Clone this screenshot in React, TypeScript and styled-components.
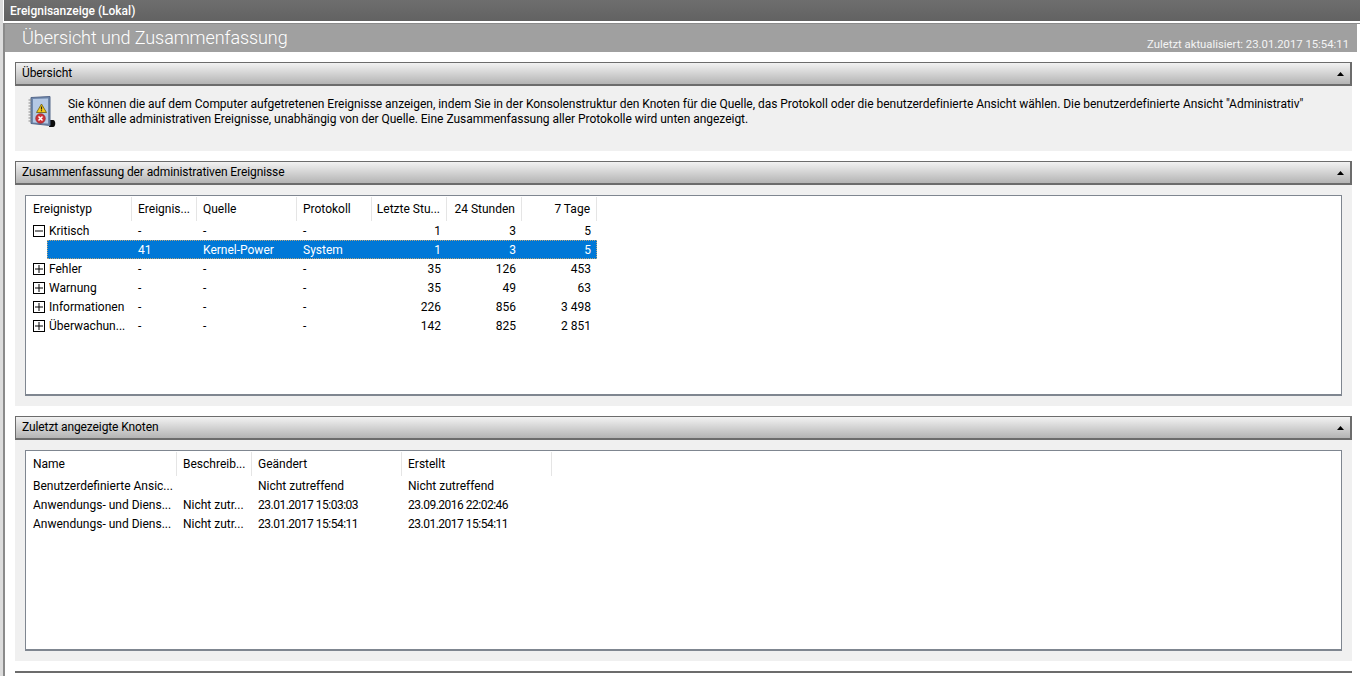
import React from "react";
import styled, { createGlobalStyle } from "styled-components";

const Global = createGlobalStyle`
  html, body { margin: 0; padding: 0; background: #fff; overflow: hidden; }
  body { font-family: Roboto, "Liberation Sans", sans-serif; font-size: 12px; color: #000; }
`;

const Page = styled.div`
  width: 1360px;
  height: 676px;
  display: flex;
  overflow: hidden;
  background: #fff;
`;
const Rail = styled.div`
  width: 3px;
  background: #dcdcdc;
  flex: none;
`;
const Main = styled.div`
  flex: 1;
  display: flex;
  flex-direction: column;
  min-width: 0;
`;
const TitleBar = styled.div`
  height: 21px;
  margin-left: 1px;
  padding-left: 6px;
  display: flex;
  align-items: center;
  font-weight: 500;
  font-size: 12px;
  color: #fff;
  background: linear-gradient(#6e6e6e, #626262);
`;
const Content = styled.div`
  flex: 1;
  margin-top: 2px;
  border-top: 1px solid #8a8a8a;
  border-left: 2px solid #8a8a8a;
  display: flex;
  flex-direction: column;
`;
const Banner = styled.div`
  height: 28px;
  margin-right: 3px;
  background: #a0a0a0;
  display: flex;
  align-items: flex-end;
  justify-content: space-between;
  padding: 0 8px 0 17px;
  color: #fff;
`;
const BannerTitle = styled.div`
  font-size: 18px;
  font-weight: 300;
  letter-spacing: -0.08px;
  line-height: 28px;
`;
const BannerMeta = styled.div`
  font-size: 11.3px;
  line-height: 14px;
  color: #f4f4f4;
`;
const Sections = styled.div`
  padding: 10px 8px 0 10px;
  display: flex;
  flex-direction: column;
  gap: 10px;
`;
const Section = styled.section`
  display: flex;
  flex-direction: column;
`;
const SectionHeader = styled.header`
  box-sizing: border-box;
  height: 24px;
  border: solid #6c6c6c;
  border-width: 1px 2px 2px 1px;
  padding: 0 0 2px 6px;
  display: flex;
  align-items: center;
  justify-content: space-between;
  letter-spacing: -0.1px;
  background: linear-gradient(#f2f2f2, #b4b4b4);
`;
const Caret = styled.svg`
  width: 7px;
  height: 4px;
  margin: 2px 6px 0 0;
  flex: none;
`;
const SectionBody = styled.div<{ $h: number }>`
  height: ${(p) => p.$h}px;
  box-sizing: border-box;
  background: #f0f0f0;
  padding: 10px;
  display: flex;
`;
const Intro = styled.div`
  display: flex;
  gap: 11px;
  padding-left: 2px;
`;
const IntroIcon = styled.svg`
  width: 30px;
  height: 32px;
  flex: none;
`;
const IntroText = styled.p`
  margin: 0;
  padding-top: 1px;
  line-height: 15px;
  white-space: nowrap;
  letter-spacing: -0.03px;
`;
const ListBox = styled.div`
  flex: 1;
  min-width: 0;
  background: #fff;
  border: solid #7f8690;
  border-width: 1px 1px 2px 1px;
  padding-top: 1px;
`;
const Row = styled.div<{ $cols: string }>`
  display: grid;
  grid-template-columns: ${(p) => p.$cols};
  height: 19px;
  align-items: start;
  line-height: 18px;
`;
const HeadRow = styled(Row)`
  height: 24px;
  line-height: 24px;
  align-items: stretch;
`;
const HeadCell = styled.div<{ $right?: boolean }>`
  padding: ${(p) => (p.$right ? "0 6px 0 0" : "0 0 0 6px")};
  text-align: ${(p) => (p.$right ? "right" : "left")};
  border-right: 1px solid #e5e5e5;
  white-space: nowrap;
  overflow: hidden;
  &:first-child { padding-left: 7px; }
`;
const Cell = styled.div<{ $right?: boolean; $date?: boolean }>`
  padding: ${(p) => (p.$right ? "1px 6px 0 0" : "1px 0 0 6px")};
  text-align: ${(p) => (p.$right ? "right" : "left")};
  letter-spacing: ${(p) => (p.$date ? "-0.5px" : "normal")};
  white-space: nowrap;
  overflow: hidden;
  &:first-child { padding-left: 7px; }
`;
const TreeCell = styled.div`
  height: 19px;
  display: flex;
  align-items: center;
  gap: 4px;
  padding-left: 7px;
  white-space: nowrap;
`;
const TreeLabel = styled.span`
  padding-top: 2px;
  line-height: 17px;
`;
const Expander = styled.svg`
  width: 12px;
  height: 12px;
  flex: none;
`;
const SelectedRow = styled(Row)`
  margin-left: 21px;
  width: max-content;
  background: #0078d7;
  color: #fff;
  outline: 1px dotted #b9a47c;
  outline-offset: -1px;
`;
const EndRule = styled.div`
  height: 2px;
  background: #6c6c6c;
`;

const summaryCols = "106px 65px 100px 75px 75px 75px 75px";
const selectedCols = "85px 65px 100px 75px 75px 75px 75px";
const nodeCols = "151px 75px 150px 150px";

const Plus = ({ open }: { open?: boolean }) => (
  <Expander viewBox="0 0 12 12">
    <rect x="0.5" y="0.5" width="11" height="11" fill="#fff" stroke="#000" />
    <path d="M2 6h8" stroke="#000" />
    {!open && <path d="M6 2v8" stroke="#000" />}
  </Expander>
);

const Chevron = () => (
  <Caret viewBox="0 0 7 4">
    <path d="M3.5 0L7 4H0z" fill="#000" />
  </Caret>
);

const BookIcon = () => (
  <IntroIcon viewBox="0 0 30 32">
    <path d="M23 24h3c3 0 3 7 0 7h-4z" fill="#0c0c0c" />
    <path d="M4 1.5l19-1v29l-19-2z" fill="#6f88ad" stroke="#55688a" />
    <path d="M6 3l15-.5v25L6 26.5z" fill="#b4c8e4" />
    <path d="M4.5 4h-3M4.5 7h-3M4.5 10h-3M4.5 13h-3M4.5 16h-3M4.5 19h-3M4.5 22h-3M4.5 25h-3" stroke="#8b8b8b" strokeWidth="1" />
    <path d="M14.5 8l5 8.5h-10z" fill="#f4c918" stroke="#6b5a10" strokeWidth="0.8" />
    <path d="M14.5 10.5v3M14.5 14.3v1" stroke="#222" strokeWidth="1.2" />
    <circle cx="13.5" cy="22.5" r="4.8" fill="#d03338" stroke="#8d1c20" strokeWidth="0.6" />
    <path d="M11.5 20.5l4 4M15.5 20.5l-4 4" stroke="#fff" strokeWidth="1.5" />
  </IntroIcon>
);

const summary = [
  { name: "Fehler", a: "35", b: "126", c: "453" },
  { name: "Warnung", a: "35", b: "49", c: "63" },
  { name: "Informationen", a: "226", b: "856", c: "3 498" },
  { name: "Überwachun...", a: "142", b: "825", c: "2 851" },
];
const nodes = [
  ["Benutzerdefinierte Ansic...", "", "Nicht zutreffend", "Nicht zutreffend"],
  ["Anwendungs- und Diens...", "Nicht zutr...", "23.01.2017 15:03:03", "23.09.2016 22:02:46"],
  ["Anwendungs- und Diens...", "Nicht zutr...", "23.01.2017 15:54:11", "23.01.2017 15:54:11"],
];

export default function App() {
  return (
    <Page>
      <Global />
      <Rail />
      <Main>
        <TitleBar>Ereignisanzeige (Lokal)</TitleBar>
        <Content>
          <Banner>
            <BannerTitle>Übersicht und Zusammenfassung</BannerTitle>
            <BannerMeta>Zuletzt aktualisiert: 23.01.2017 15:54:11</BannerMeta>
          </Banner>
          <Sections>
            <Section>
              <SectionHeader>
                Übersicht
                <Chevron />
              </SectionHeader>
              <SectionBody $h={65}>
                <Intro>
                  <BookIcon />
                  <IntroText>
                    Sie können die auf dem Computer aufgetretenen Ereignisse anzeigen, indem Sie in der Konsolenstruktur den Knoten für die Quelle, das Protokoll oder die benutzerdefinierte Ansicht wählen. Die benutzerdefinierte Ansicht "Administrativ"<br />enthält alle administrativen Ereignisse, unabhängig von der Quelle. Eine Zusammenfassung aller Protokolle wird unten angezeigt.
                  </IntroText>
                </Intro>
              </SectionBody>
            </Section>
            <Section>
              <SectionHeader>
                Zusammenfassung der administrativen Ereignisse
                <Chevron />
              </SectionHeader>
              <SectionBody $h={221}>
                <ListBox>
                  <HeadRow $cols={summaryCols}>
                    <HeadCell>Ereignistyp</HeadCell>
                    <HeadCell>Ereignis...</HeadCell>
                    <HeadCell>Quelle</HeadCell>
                    <HeadCell>Protokoll</HeadCell>
                    <HeadCell $right>Letzte Stu...</HeadCell>
                    <HeadCell $right>24 Stunden</HeadCell>
                    <HeadCell $right>7 Tage</HeadCell>
                  </HeadRow>
                  <Row $cols={summaryCols}>
                    <TreeCell><Plus open /><TreeLabel>Kritisch</TreeLabel></TreeCell>
                    <Cell>-</Cell>
                    <Cell>-</Cell>
                    <Cell>-</Cell>
                    <Cell $right>1</Cell>
                    <Cell $right>3</Cell>
                    <Cell $right>5</Cell>
                  </Row>
                  <SelectedRow $cols={selectedCols}>
                    <Cell />
                    <Cell>41</Cell>
                    <Cell>Kernel-Power</Cell>
                    <Cell>System</Cell>
                    <Cell $right>1</Cell>
                    <Cell $right>3</Cell>
                    <Cell $right>5</Cell>
                  </SelectedRow>
                  {summary.map((r) => (
                    <Row $cols={summaryCols} key={r.name}>
                      <TreeCell><Plus /><TreeLabel>{r.name}</TreeLabel></TreeCell>
                      <Cell>-</Cell>
                      <Cell>-</Cell>
                      <Cell>-</Cell>
                      <Cell $right>{r.a}</Cell>
                      <Cell $right>{r.b}</Cell>
                      <Cell $right>{r.c}</Cell>
                    </Row>
                  ))}
                </ListBox>
              </SectionBody>
            </Section>
            <Section>
              <SectionHeader>
                Zuletzt angezeigte Knoten
                <Chevron />
              </SectionHeader>
              <SectionBody $h={221}>
                <ListBox>
                  <HeadRow $cols={nodeCols}>
                    <HeadCell>Name</HeadCell>
                    <HeadCell>Beschreib...</HeadCell>
                    <HeadCell>Geändert</HeadCell>
                    <HeadCell>Erstellt</HeadCell>
                  </HeadRow>
                  {nodes.map((n, i) => (
                    <Row $cols={nodeCols} key={i}>
                      {n.map((t, j) => (
                        <Cell key={j} $date={/^\d/.test(t)}>{t}</Cell>
                      ))}
                    </Row>
                  ))}
                </ListBox>
              </SectionBody>
            </Section>
            <EndRule />
          </Sections>
        </Content>
      </Main>
    </Page>
  );
}
